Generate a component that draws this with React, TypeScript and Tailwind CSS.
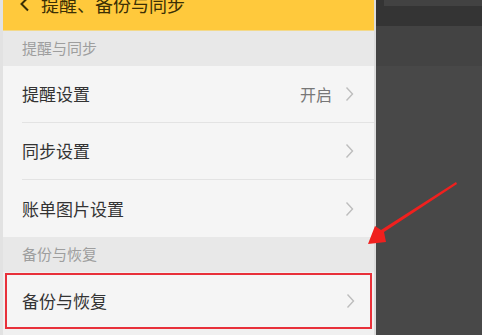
import React from 'react';

const font = { fontFamily: '"Noto Sans CJK SC", "Noto Sans", sans-serif' };

const Chevron = () => (
  <svg width="9" height="16" viewBox="0 0 9 16" className="shrink-0">
    <path d="M1.5 1.5 L7.5 8 L1.5 14.5" fill="none" stroke="#bdbdbd" strokeWidth="1.4" />
  </svg>
);

interface RowProps {
  label: string;
  value?: string;
  divider?: boolean;
}

const Row: React.FC<RowProps> = ({ label, value, divider }) => (
  <div className="pl-[19px] bg-[#f5f5f5]">
    <div className={`flex items-center h-[57px] pr-[20px] ${divider ? 'border-b border-[#e3e3e3]' : ''}`}>
      <span className="text-[17px] text-[#333333] flex-1">{label}</span>
      {value && <span className="text-[16px] text-[#777777] mr-[13px]">{value}</span>}
      <Chevron />
    </div>
  </div>
);

const SectionHeader: React.FC<{ title: string }> = ({ title }) => (
  <div className="h-[35px] bg-[#e8e8e8] flex items-center pl-[19px] text-[15px] text-[#9e9e9e]">
    {title}
  </div>
);

export default function App() {
  return (
    <div className="relative w-[482px] h-[335px] overflow-hidden flex bg-[#474747]" style={font}>
      {/* phone screen */}
      <div className="w-[376px] shrink-0 flex flex-col bg-[#f0f0f0] border-l-[3px] border-l-[#e2e2e2] border-r-[2px] border-r-[#dcdcdc]">
        <div className="h-[31px] bg-[#ffc93c] border-b border-b-[#f3d98a] overflow-hidden">
          <div className="flex items-center h-[20px] -mt-[6px] pl-[16px] text-[#3b2f05]">
            <svg width="12" height="16" viewBox="0 0 12 16">
              <path d="M9 1.5 L2.5 8 L9 14.5" fill="none" stroke="#3b2f05" strokeWidth="2" />
            </svg>
            <span className="ml-[10px] text-[18px] leading-none">提醒、备份与同步</span>
          </div>
        </div>
        <SectionHeader title="提醒与同步" />
        <Row label="提醒设置" value="开启" divider />
        <Row label="同步设置" divider />
        <Row label="账单图片设置" />
        <SectionHeader title="备份与恢复" />
        <div className="mt-[1px] ml-[2px] mr-[2px] border-2 border-[#e8303a] h-[56px] flex items-center pl-[15px] pr-[15px] bg-[#f5f5f5]">
          <span className="text-[17px] text-[#333333] flex-1">备份与恢复</span>
          <Chevron />
        </div>
      </div>

      {/* dark background on the right */}
      <div className="flex-1 flex flex-col">
        <div className="h-[26px] bg-[#343434] pl-[8px]">
          <div className="h-[6px] bg-[#424242]" />
        </div>
        <div className="h-[40px] bg-[#434343]" />
        <div className="flex-1 bg-[#484848]" />
      </div>

      {/* red annotation arrow */}
      <svg className="absolute left-0 top-0 pointer-events-none" width="482" height="335" viewBox="0 0 482 335">
        <polygon points="456,182 457,184 384,232 386,242 368,244 375,226 381,230" fill="#f0201e" />
      </svg>
    </div>
  );
}
